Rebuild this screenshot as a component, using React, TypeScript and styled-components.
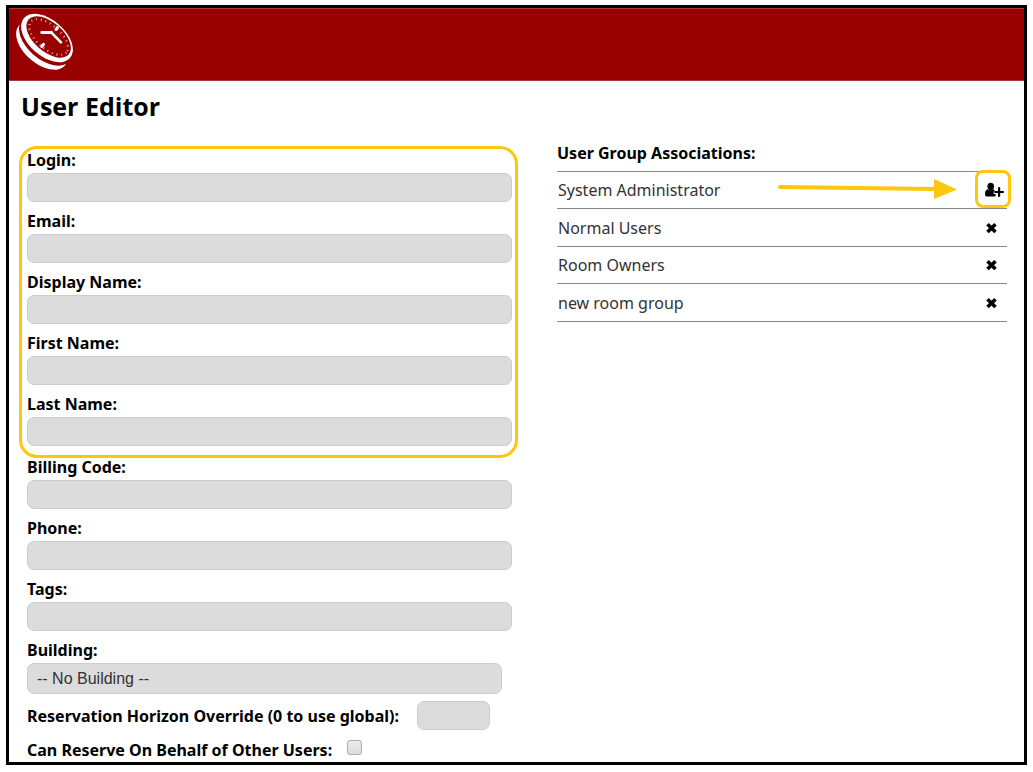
import React from "react";
import styled, { createGlobalStyle } from "styled-components";

const ACCENT = "#ffc60e";

const GlobalStyle = createGlobalStyle`
  *, *::before, *::after { box-sizing: border-box; }
  body {
    margin: 0;
    background: #fff;
    color: #000;
    font-family: "Noto Sans", "Open Sans", sans-serif;
    font-size: 16px;
  }
`;

const Frame = styled.div`
  margin: 5px 6px 7px;
  min-height: calc(100vh - 12px);
  border: 3px solid #000;
  background: #fff;
`;

const Header = styled.header`
  height: 73px;
  padding: 4px 6px;
  background: #990000;
  border: solid #ab3a3a;
  border-width: 1px 0;
`;

const Title = styled.h1`
  margin: 9px 12px 22px;
  font-family: "Open Sans", "Noto Sans", sans-serif;
  font-size: 25px;
  line-height: 32px;
  font-weight: 700;
`;

const Columns = styled.main`
  display: grid;
  grid-template-columns: minmax(0, 499fr) minmax(0, 450fr);
  column-gap: 39px;
  align-items: start;
  padding: 0 17px 0 10px;
`;

const EditorForm = styled.form`
  padding-top: 2px;
`;

const FieldStack = styled.div<{ $highlight?: boolean }>`
  display: flex;
  flex-direction: column;
  gap: 10px;
  padding: ${(p) => (p.$highlight ? "2px 3px 9px 5px" : "0 6px 0 8px")};
  ${(p) => p.$highlight && `border: 3px solid ${ACCENT}; border-radius: 18px;`}
`;

const Field = styled.div`
  display: flex;
  flex-direction: column;
  gap: 4px;
`;

const Label = styled.label`
  font-weight: 700;
  line-height: 18px;
  white-space: nowrap;
`;

const TextInput = styled.input<{ $short?: boolean }>`
  width: ${(p) => (p.$short ? "73px" : "100%")};
  height: 29px;
  padding: 0 10px;
  border: 1px solid #cdcdcd;
  border-radius: 7px;
  background: #dcdcdc;
  font: inherit;
`;

const Select = styled.select`
  appearance: none;
  height: 31px;
  margin-right: 10px;
  padding: 0 9px;
  border: 1px solid #cdcdcd;
  border-radius: 7px;
  background: #dcdcdc;
  color: #333;
  font: 16px "Liberation Sans", Arial, sans-serif;
`;

const Options = styled.div`
  display: flex;
  flex-direction: column;
  gap: 10px;
  padding: 7px 6px 0 8px;
`;

const InlineField = styled.div`
  display: flex;
  align-items: center;
  gap: 18px;
`;

const Checkbox = styled.input`
  appearance: none;
  width: 15px;
  height: 15px;
  margin: 0 0 4px -3px;
  border: 1px solid #adadad;
  border-radius: 3px;
  background: linear-gradient(#ececec, #dcdcdc);
`;

const GroupHeading = styled.h2`
  margin: 0 0 9px;
  font-size: 16px;
  line-height: 18px;
  font-weight: 700;
`;

const GroupList = styled.ul`
  margin: 0;
  padding: 0;
  list-style: none;
  border-top: 1px solid #868686;
`;

const GroupRow = styled.li`
  position: relative;
  display: flex;
  align-items: center;
  justify-content: space-between;
  height: 37px;
  padding: 0 1px;
  border-bottom: 1px solid #868686;
  color: #333;
  &:nth-child(even) {
    height: 38px;
  }
`;

const IconButton = styled.button<{ $highlight?: boolean }>`
  position: relative;
  display: flex;
  width: 24px;
  height: 20px;
  padding: 2px;
  border: 0;
  background: none;
  color: #000;
  cursor: pointer;
  ${(p) =>
    p.$highlight &&
    `&::after {
      content: "";
      position: absolute;
      inset: -10px -5px -8px -7px;
      border: 3px solid ${ACCENT};
      border-radius: 8px;
    }`}
`;

const Arrow = styled.svg`
  position: absolute;
  right: 50px;
  top: 6px;
`;

const ClockLogo = () => (
  <svg width="60" height="60" viewBox="15 13 60 60" role="img" aria-label="Clock">
    <ellipse cx="42" cy="45.500" rx="30.500" ry="18" transform="rotate(41 42 45.5)" fill="#fff" />
    <ellipse cx="45.800" cy="40.600" rx="31.500" ry="18.800" transform="rotate(41 45.8 40.6)" fill="#990000" />
    <ellipse cx="47" cy="38" rx="30.500" ry="18" transform="rotate(41 47 38)" fill="#fff" />
    <ellipse cx="48.600" cy="37" rx="26.600" ry="14.600" transform="rotate(41 48.6 37)" fill="#990000" />
    <ellipse
      cx="48.600"
      cy="37"
      rx="23.500"
      ry="11.800"
      transform="rotate(41 48.6 37)"
      fill="none"
      stroke="#fff"
      strokeOpacity="0.7"
      strokeWidth="2.200"
      strokeDasharray="1 3.800"
    />
    <g stroke="#fff" strokeLinecap="round" fill="none">
      <path d="M41.800 32.400l9.800 .2" strokeWidth="3" />
      <path d="M51.500 32.600l9.500 9.800" strokeWidth="2.600" />
      <path d="M57.300 27.500l-1.300 2M43.600 44.300l-1.800 2.200" strokeWidth="3" />
    </g>
  </svg>
);

const UserPlusIcon = () => (
  <svg width="20" height="16" viewBox="0 0 20 16" fill="currentColor" aria-hidden="true">
    <ellipse cx="6.700" cy="4.400" rx="3.300" ry="3.700" />
    <path d="M3.700 7.200C1.900 7.500 1 9 1 12.200c0 1.600.8 2.400 2.200 2.400h7.200c.5 0 .9-.1 1.200-.4v-2.200H9.600V9.300h1.300c-.4-1.300-.9-1.900-1.700-2.100-1.500 1.400-3.900 1.400-5.500 0z" />
    <path d="M14 5.200h2.200v3.700h3.600v2.200h-3.600v3.600H14v-3.600h-3.700V8.900H14z" />
  </svg>
);

const RemoveIcon = () => (
  <svg width="14" height="16" viewBox="0 0 14 16" aria-hidden="true">
    <path d="M3.500 4.300l8 7.700M11.500 4.300l-8 7.700" stroke="currentColor" strokeWidth="3.600" />
  </svg>
);

const TextField = ({ label }: { label: string }) => {
  const id = label.toLowerCase().replace(/ /g, "-");
  return (
    <Field>
      <Label htmlFor={id}>{label}:</Label>
      <TextInput id={id} type="text" />
    </Field>
  );
};

const identityFields = ["Login", "Email", "Display Name", "First Name", "Last Name"];
const detailFields = ["Billing Code", "Phone", "Tags"];
const memberGroups = ["Normal Users", "Room Owners", "new room group"];

export default function App() {
  return (
    <>
      <GlobalStyle />
      <Frame>
        <Header>
          <ClockLogo />
        </Header>
        <Title>User Editor</Title>
        <Columns>
          <EditorForm>
            <FieldStack $highlight>
              {identityFields.map((f) => (
                <TextField key={f} label={f} />
              ))}
            </FieldStack>
            <FieldStack>
              {detailFields.map((f) => (
                <TextField key={f} label={f} />
              ))}
              <Field>
                <Label htmlFor="building">Building:</Label>
                <Select id="building">
                  <option>-- No Building --</option>
                </Select>
              </Field>
            </FieldStack>
            <Options>
              <InlineField>
                <Label htmlFor="horizon">Reservation Horizon Override (0 to use global):</Label>
                <TextInput id="horizon" type="text" $short />
              </InlineField>
              <InlineField>
                <Label htmlFor="behalf">Can Reserve On Behalf of Other Users:</Label>
                <Checkbox id="behalf" type="checkbox" />
              </InlineField>
            </Options>
          </EditorForm>
          <section>
            <GroupHeading>User Group Associations:</GroupHeading>
            <GroupList>
              <GroupRow>
                System Administrator
                <Arrow width="180" height="22" viewBox="0 0 180 22" aria-hidden="true">
                  <path d="M3 9l155 2" stroke={ACCENT} strokeWidth="4" strokeLinecap="round" />
                  <path d="M157 1v20l23-9.500z" fill={ACCENT} />
                </Arrow>
                <IconButton type="button" aria-label="Add to System Administrator" $highlight>
                  <UserPlusIcon />
                </IconButton>
              </GroupRow>
              {memberGroups.map((g) => (
                <GroupRow key={g}>
                  {g}
                  <IconButton type="button" aria-label={`Remove from ${g}`}>
                    <RemoveIcon />
                  </IconButton>
                </GroupRow>
              ))}
            </GroupList>
          </section>
        </Columns>
      </Frame>
    </>
  );
}
